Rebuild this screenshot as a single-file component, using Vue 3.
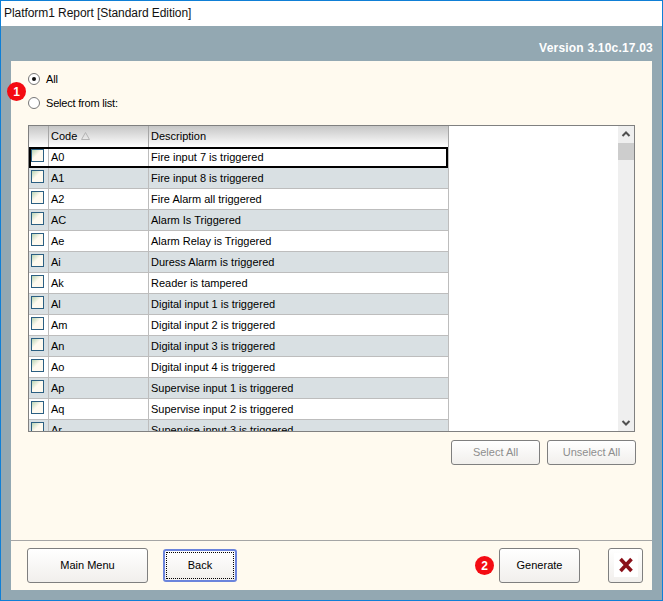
<template>
  <div class="window">
    <div class="titlebar">Platform1 Report [Standard Edition]</div>
    <div class="frame">
      <div class="version">Version 3.10c.17.03</div>
      <div class="panel">
        <div class="options">
          <label class="radio-row">
            <span class="radio checked"></span>
            <span>All</span>
          </label>
          <label class="radio-row">
            <span class="radio"></span>
            <span>Select from list:</span>
          </label>
          <span class="badge badge-one">1</span>
        </div>

        <div class="grid">
          <div class="table">
            <div class="head">
              <div class="cell-check"></div>
              <div class="cell-code">
                Code
                <svg class="sort" width="9" height="8" viewBox="0 0 9 8">
                  <path d="M4.5 .5 L8.5 7.5 H.5 Z" fill="none" stroke="#b4b4b4" />
                </svg>
              </div>
              <div class="cell-desc">Description</div>
            </div>
            <div
              v-for="(row, i) in rows"
              :key="row.code"
              class="row"
              :class="{ alt: i % 2 === 1, current: i === 0 }"
            >
              <div class="cell-check"><span class="checkbox"></span></div>
              <div class="cell-code">{{ row.code }}</div>
              <div class="cell-desc">{{ row.desc }}</div>
            </div>
          </div>
          <div class="scrollbar">
            <svg class="arrow" width="16" height="17" viewBox="0 0 16 17">
              <path d="M4.5 10 L8 6.5 L11.5 10" fill="none" stroke="#505050" stroke-width="2" />
            </svg>
            <div class="thumb"></div>
            <div class="track"></div>
            <svg class="arrow" width="16" height="17" viewBox="0 0 16 17">
              <path d="M4.5 7 L8 10.5 L11.5 7" fill="none" stroke="#505050" stroke-width="2" />
            </svg>
          </div>
        </div>

        <div class="grid-actions">
          <button class="btn small" disabled>Select All</button>
          <button class="btn small" disabled>Unselect All</button>
        </div>

        <div class="footer">
          <button class="btn main">Main Menu</button>
          <button class="btn back"><span class="focus-ring">Back</span></button>
          <div class="spacer"></div>
          <div class="generate-wrap">
            <span class="badge badge-two">2</span>
            <button class="btn generate">Generate</button>
          </div>
          <button class="btn close" aria-label="Close">
            <span class="close-bg">
              <svg width="18" height="18" viewBox="0 0 18 18">
                <path d="M3.5 3 L14.5 15 M14.5 3 L3.5 15" stroke="#8a0f18" stroke-width="3.6" />
              </svg>
            </span>
          </button>
        </div>
      </div>
    </div>
  </div>
</template>

<script setup>
const rows = [
  { code: 'A0', desc: 'Fire input 7 is triggered' },
  { code: 'A1', desc: 'Fire input 8 is triggered' },
  { code: 'A2', desc: 'Fire Alarm all triggered' },
  { code: 'AC', desc: 'Alarm Is Triggered' },
  { code: 'Ae', desc: 'Alarm Relay is Triggered' },
  { code: 'Ai', desc: 'Duress Alarm is triggered' },
  { code: 'Ak', desc: 'Reader is tampered' },
  { code: 'Al', desc: 'Digital input 1 is triggered' },
  { code: 'Am', desc: 'Digital input 2 is triggered' },
  { code: 'An', desc: 'Digital input 3 is triggered' },
  { code: 'Ao', desc: 'Digital input 4 is triggered' },
  { code: 'Ap', desc: 'Supervise input 1 is triggered' },
  { code: 'Aq', desc: 'Supervise input 2 is triggered' },
  { code: 'Ar', desc: 'Supervise input 3 is triggered' }
]
</script>

<style>
html,
body {
  margin: 0;
  background: #fff;
}
</style>

<style scoped>
.window {
  box-sizing: border-box;
  width: 663px;
  height: 601px;
  display: flex;
  flex-direction: column;
  border: 1px solid #0f7fd6;
  font-family: 'Liberation Sans', Arial, sans-serif;
  font-size: 11px;
  color: #000;
}

.titlebar {
  height: 25px;
  line-height: 24px;
  padding-left: 3px;
  background: #fff;
  font-size: 12px;
  letter-spacing: -0.06px;
  color: #111;
}

.frame {
  flex: 1;
  display: flex;
  flex-direction: column;
  background: #93a8b2;
  padding: 0 10px 10px;
  min-height: 0;
}

.version {
  height: 35px;
  line-height: 45px;
  margin-right: -10px;
  padding-right: 9px;
  text-align: right;
  color: #fff;
  font-weight: 700;
  font-size: 12px;
  letter-spacing: 0.2px;
}

.panel {
  flex: 1;
  display: flex;
  flex-direction: column;
  background: #fffaef;
  min-height: 0;
}

.options {
  box-sizing: border-box;
  position: relative;
  padding: 6px 0 0 17px;
  height: 54px;
}

.radio-row {
  display: flex;
  align-items: center;
  gap: 6px;
  height: 24px;
  letter-spacing: -0.2px;
}

.radio {
  box-sizing: border-box;
  width: 12px;
  height: 12px;
  margin-top: -1px;
  border: 1px solid #777;
  border-radius: 50%;
  background: #fff;
  position: relative;
}

.radio.checked::after {
  content: '';
  position: absolute;
  left: 3px;
  top: 3px;
  width: 4px;
  height: 4px;
  border-radius: 50%;
  background: #111;
}

.badge {
  position: absolute;
  display: flex;
  align-items: center;
  justify-content: center;
  width: 19px;
  height: 19px;
  border-radius: 50%;
  background: #f40b12;
  color: #fff;
  font-weight: 700;
  font-size: 12px;
}

.badge-one {
  left: -4px;
  top: 21px;
}

.badge-two {
  left: -24px;
  top: 8px;
}

.grid {
  box-sizing: border-box;
  display: flex;
  width: 607px;
  height: 307px;
  margin: 10px 0 0 17px;
  border: 1px solid #808080;
  background: #fff;
  overflow: hidden;
}

.table {
  flex: 1;
  min-width: 0;
}

.head,
.row {
  display: flex;
  width: 420px;
  box-sizing: border-box;
}

.head {
  height: 21px;
  line-height: 20px;
  background: linear-gradient(#c6c6c6, #ffffff);
}

.head > div {
  border-right: 1px solid #a6a6a6;
}

.row {
  height: 21px;
  line-height: 20px;
  position: relative;
  flex: none;
}

.row.alt {
  background: #d9e0e3;
}

.row > div {
  border-right: 1px solid #bdbdbd;
  border-bottom: 1px solid #bdbdbd;
}

.cell-check {
  box-sizing: border-box;
  width: 20px;
  flex: none;
}

.cell-code {
  box-sizing: border-box;
  width: 100px;
  flex: none;
  padding-left: 2px;
  white-space: nowrap;
}

.cell-desc {
  box-sizing: border-box;
  flex: 1;
  padding-left: 2px;
  white-space: nowrap;
}

.sort {
  margin-left: 1px;
}

.row.current::after {
  content: '';
  position: absolute;
  inset: 0 1px 0 0;
  border: 2px solid #000;
  pointer-events: none;
}

.checkbox {
  display: block;
  box-sizing: border-box;
  width: 13px;
  height: 13px;
  margin: 2px 0 0 2px;
  border: 1px solid #2b5f82;
  background: linear-gradient(135deg, #b8d4b4 0, #fffaef 45%);
}

.scrollbar {
  width: 16px;
  margin-left: auto;
  display: flex;
  flex-direction: column;
  background: #efefef;
  flex: none;
}

.arrow {
  display: block;
  flex: none;
}

.thumb {
  height: 17px;
  background: #cdcdcd;
  flex: none;
}

.track {
  flex: 1;
}

.grid-actions {
  display: flex;
  justify-content: flex-end;
  gap: 7px;
  margin: 8px 16px 0 0;
}

.btn {
  box-sizing: border-box;
  border: 1px solid #7f7f7f;
  border-radius: 3px;
  background: linear-gradient(#ffffff, #f1efec);
  font-family: 'Liberation Sans', Arial, sans-serif;
  font-size: 11px;
  color: #000;
  padding: 0 0 1px;
}

.btn.small {
  width: 89px;
  height: 25px;
  color: #8e8e8e;
}

.footer {
  display: flex;
  align-items: center;
  margin-top: auto;
  height: 50px;
  box-sizing: border-box;
  border-top: 1px solid #a5a5a5;
  padding: 0 9px 0 16px;
}

.main {
  width: 121px;
  height: 35px;
}

.back {
  width: 74px;
  height: 33px;
  margin-left: 15px;
  border: 2px solid #6b84dc;
  padding: 1px;
}

.focus-ring {
  display: flex;
  align-items: center;
  justify-content: center;
  height: 100%;
  padding-bottom: 1px;
  border: 1px dotted #000;
  box-sizing: border-box;
}

.spacer {
  flex: 1;
}

.generate-wrap {
  position: relative;
}

.generate {
  display: block;
  width: 81px;
  height: 35px;
}

.close {
  width: 35px;
  height: 35px;
  margin-left: 28px;
  display: flex;
  align-items: center;
  justify-content: center;
}

.close-bg {
  display: flex;
  width: 24px;
  height: 24px;
  align-items: center;
  justify-content: center;
  background: #fff;
}
</style>
